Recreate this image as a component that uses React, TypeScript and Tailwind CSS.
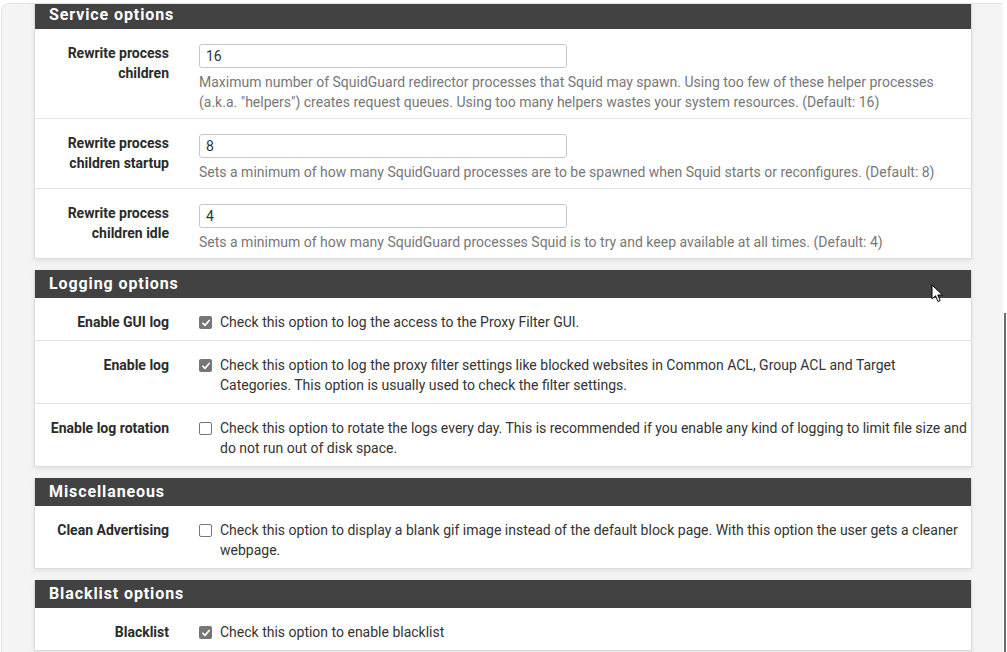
import React from 'react';

type Row =
  | { kind: 'input'; label: string[]; value: string; help: string }
  | { kind: 'check'; label: string; checked: boolean; text: string };

type Section = { title: string; rows: Row[] };

const sections: Section[] = [
  {
    title: 'Service options',
    rows: [
      {
        kind: 'input',
        label: ['Rewrite process', 'children'],
        value: '16',
        help: 'Maximum number of SquidGuard redirector processes that Squid may spawn. Using too few of these helper processes (a.k.a. "helpers") creates request queues. Using too many helpers wastes your system resources. (Default: 16)',
      },
      {
        kind: 'input',
        label: ['Rewrite process', 'children startup'],
        value: '8',
        help: 'Sets a minimum of how many SquidGuard processes are to be spawned when Squid starts or reconfigures. (Default: 8)',
      },
      {
        kind: 'input',
        label: ['Rewrite process', 'children idle'],
        value: '4',
        help: 'Sets a minimum of how many SquidGuard processes Squid is to try and keep available at all times. (Default: 4)',
      },
    ],
  },
  {
    title: 'Logging options',
    rows: [
      { kind: 'check', label: 'Enable GUI log', checked: true, text: 'Check this option to log the access to the Proxy Filter GUI.' },
      {
        kind: 'check',
        label: 'Enable log',
        checked: true,
        text: 'Check this option to log the proxy filter settings like blocked websites in Common ACL, Group ACL and Target Categories. This option is usually used to check the filter settings.',
      },
      {
        kind: 'check',
        label: 'Enable log rotation',
        checked: false,
        text: 'Check this option to rotate the logs every day. This is recommended if you enable any kind of logging to limit file size and do not run out of disk space.',
      },
    ],
  },
  {
    title: 'Miscellaneous',
    rows: [
      {
        kind: 'check',
        label: 'Clean Advertising',
        checked: false,
        text: 'Check this option to display a blank gif image instead of the default block page. With this option the user gets a cleaner webpage.',
      },
    ],
  },
  {
    title: 'Blacklist options',
    rows: [{ kind: 'check', label: 'Blacklist', checked: true, text: 'Check this option to enable blacklist' }],
  },
];

const CheckBox = ({ checked }: { checked: boolean }) =>
  checked ? (
    <span className="mt-[4px] flex h-[13px] w-[13px] shrink-0 items-center justify-center rounded-[2px] bg-[#767676]">
      <svg viewBox="0 0 12 12" className="h-[10px] w-[10px]">
        <path d="M2.2 6.3 L4.8 8.8 L9.8 3" fill="none" stroke="#fff" strokeWidth="2" strokeLinecap="round" strokeLinejoin="round" />
      </svg>
    </span>
  ) : (
    <span className="mt-[4px] h-[13px] w-[13px] shrink-0 rounded-[2px] border border-[#767676] bg-white" />
  );

const FormRow = ({ row, last }: { row: Row; last: boolean }) => (
  <div className={`flex ${last ? '' : 'border-b border-[#e3e3e3]'}`}>
    <div className="w-[134px] shrink-0 pt-[14px] text-right text-[14px] font-bold leading-[20px] text-[#2b2b2b]">
      {row.kind === 'input' ? row.label.map((l) => <div key={l}>{l}</div>) : row.label}
    </div>
    {row.kind === 'input' ? (
      <div className="ml-[30px] flex-1 pt-[15px] pb-[6px] pr-[3px]">
        <div className="flex h-[24px] w-[368px] items-center rounded-[3px] border border-[#c8c8c8] bg-white px-[6px] text-[14px] text-[#333]">
          {row.value}
        </div>
        <p className="mt-[4px] text-[14px] leading-[20px] text-[#777]">{row.help}</p>
      </div>
    ) : (
      <div className="ml-[30px] flex flex-1 gap-[8px] pt-[14px] pb-[8px] pr-[2px]">
        <CheckBox checked={row.checked} />
        <p className="text-[14px] leading-[20px] text-[#333]">{row.text}</p>
      </div>
    )}
  </div>
);

const Panel = ({ section }: { section: Section }) => (
  <div className="border-x border-b border-[#dcdcdc] bg-white shadow-[0_2px_5px_rgba(0,0,0,0.08)]">
    <div className="flex h-[28px] items-center bg-[#424242] px-[14px] text-[16px] font-bold tracking-[0.9px] text-white">
      {section.title}
    </div>
    {section.rows.map((r, i) => (
      <FormRow key={i} row={r} last={i === section.rows.length - 1} />
    ))}
  </div>
);

export default function App() {
  return (
    <div className="relative flex h-screen overflow-hidden bg-white font-['Roboto',sans-serif]">
      <div className="ml-px mt-[3px] w-[1002px] overflow-hidden rounded-tl-[8px] border-l border-t border-[#e4e4e4] bg-[#f4f4f4] pl-[32px] pr-[31px]">
        <div className="-mt-[3px] flex flex-col gap-[11px]">
          {sections.map((s) => (
            <Panel key={s.title} section={s} />
          ))}
        </div>
      </div>
      <div className="relative w-[4px] bg-white">
        <div className="absolute left-[1px] top-[313px] h-[340px] w-[2px] bg-[#6b6b6b]" />
      </div>
      <svg className="absolute left-[931px] top-[284px]" width="13" height="19" viewBox="0 0 13 19">
        <path d="M1 1 L1 15 L4.5 11.8 L7 17.5 L9.2 16.5 L6.8 11 L11.5 11 Z" fill="#fff" stroke="#000" strokeWidth="1" strokeLinejoin="round" />
      </svg>
    </div>
  );
}
